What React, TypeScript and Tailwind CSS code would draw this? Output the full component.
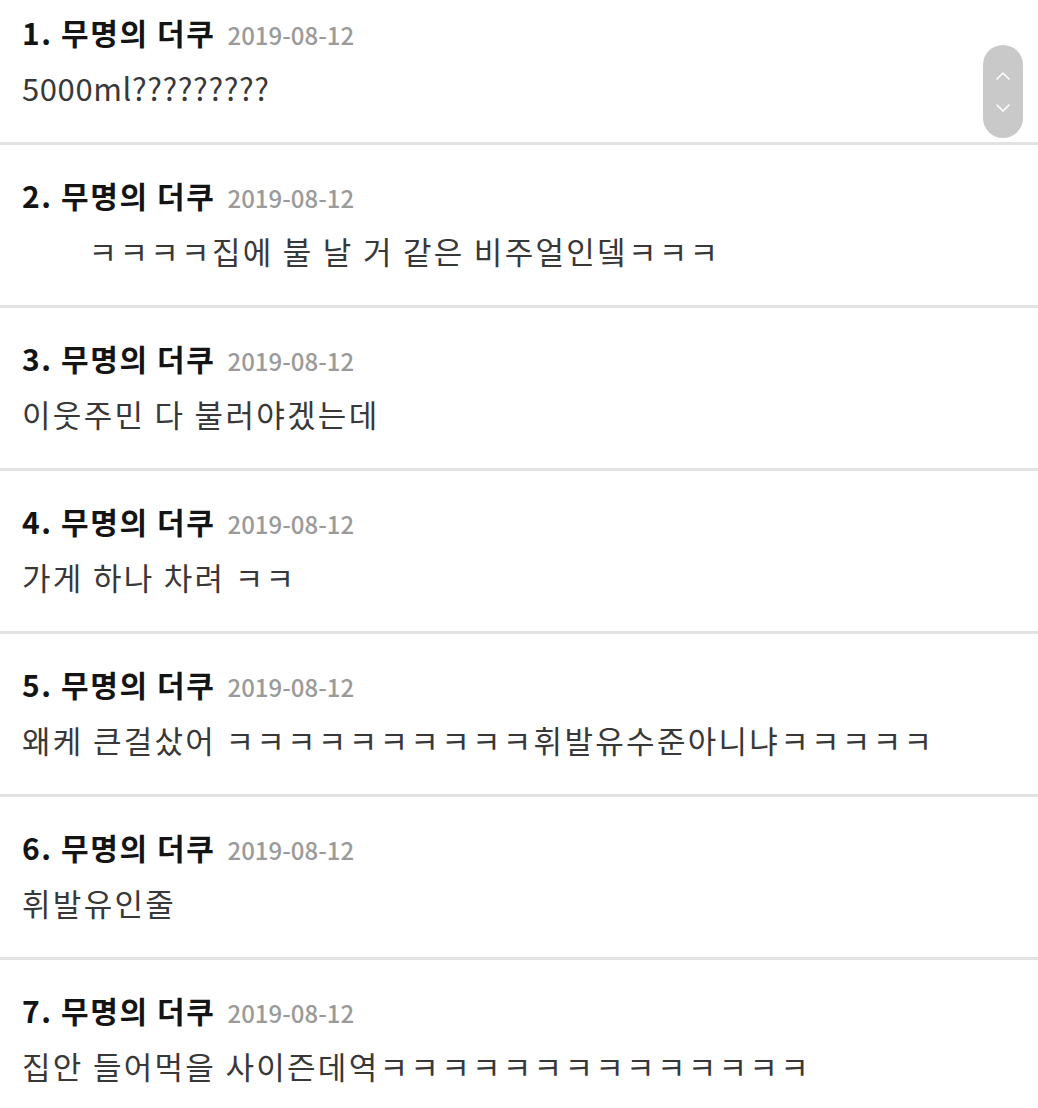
import React from "react";

type Comment = { no: number; author: string; date: string; body: string };

const comments: Comment[] = [
  { no: 1, author: "무명의 더쿠", date: "2019-08-12", body: "5000ml?????????" },
  { no: 2, author: "무명의 더쿠", date: "2019-08-12", body: "\u3000\u3000ㅋㅋㅋㅋ집에 불 날 거 같은 비주얼인뎈ㅋㅋㅋ" },
  { no: 3, author: "무명의 더쿠", date: "2019-08-12", body: "이웃주민 다 불러야겠는데" },
  { no: 4, author: "무명의 더쿠", date: "2019-08-12", body: "가게 하나 차려 ㅋㅋ" },
  { no: 5, author: "무명의 더쿠", date: "2019-08-12", body: "왜케 큰걸샀어 ㅋㅋㅋㅋㅋㅋㅋㅋㅋㅋ휘발유수준아니냐ㅋㅋㅋㅋㅋ" },
  { no: 6, author: "무명의 더쿠", date: "2019-08-12", body: "휘발유인줄" },
  { no: 7, author: "무명의 더쿠", date: "2019-08-12", body: "집안 들어먹을 사이즌데역ㅋㅋㅋㅋㅋㅋㅋㅋㅋㅋㅋㅋㅋㅋ" },
];

// hangul runs are set a bit wider than latin ones
const isKo = (s: string) => /[\u3000-\u303f\u3130-\u318f\uac00-\ud7af]/.test(s);

function Body({ text }: { text: string }) {
  const parts = text.split(/([\u3000-\u303f\u3130-\u318f\uac00-\ud7af ]+)/).filter(Boolean);
  return (
    <>
      {parts.map((p, i) => (
        <span key={i} className={isKo(p) ? "tracking-[2.3px]" : "tracking-[0.6px]"}>{p}</span>
      ))}
    </>
  );
}

export default function App() {
  return (
    <div
      className="relative w-[1038px] h-[1108px] overflow-hidden bg-white"
      style={{ fontFamily: '"Noto Sans CJK KR", "Noto Sans", sans-serif' }}
    >
      <ul>
        {comments.map((c, i) => (
          <li
            key={c.no}
            className={
              (i === 0 ? "pt-[12px] " : "pt-[30px] ") +
              "pb-[32px] px-[22px] border-b-[3px] border-[#e2e2e2]"
            }
          >
            <div className="h-[40px] leading-[40px] whitespace-nowrap">
              <span className="text-[30px] font-bold text-[#141414] tracking-[1.6px]">
                {c.no}. {c.author}
              </span>
              <span className="ml-[12px] text-[24px] font-medium text-[#9a9a9a]">{c.date}</span>
            </div>
            <div className="mt-[14px] text-[31px] leading-[44px] text-[#383838] whitespace-pre">
              <Body text={c.body} />
            </div>
          </li>
        ))}
      </ul>

      {/* scroll buttons */}
      <div className="absolute left-[983px] top-[45px] w-[40px] h-[93px] rounded-full bg-[#c9c9c9] flex flex-col items-center justify-center gap-[22px]">
        <svg width="16" height="10" viewBox="0 0 16 10" fill="none" stroke="#fff" strokeWidth="1.6" strokeLinecap="round" strokeLinejoin="round">
          <path d="M2 8 L8 2 L14 8" />
        </svg>
        <svg width="16" height="10" viewBox="0 0 16 10" fill="none" stroke="#fff" strokeWidth="1.6" strokeLinecap="round" strokeLinejoin="round">
          <path d="M2 2 L8 8 L14 2" />
        </svg>
      </div>
    </div>
  );
}
